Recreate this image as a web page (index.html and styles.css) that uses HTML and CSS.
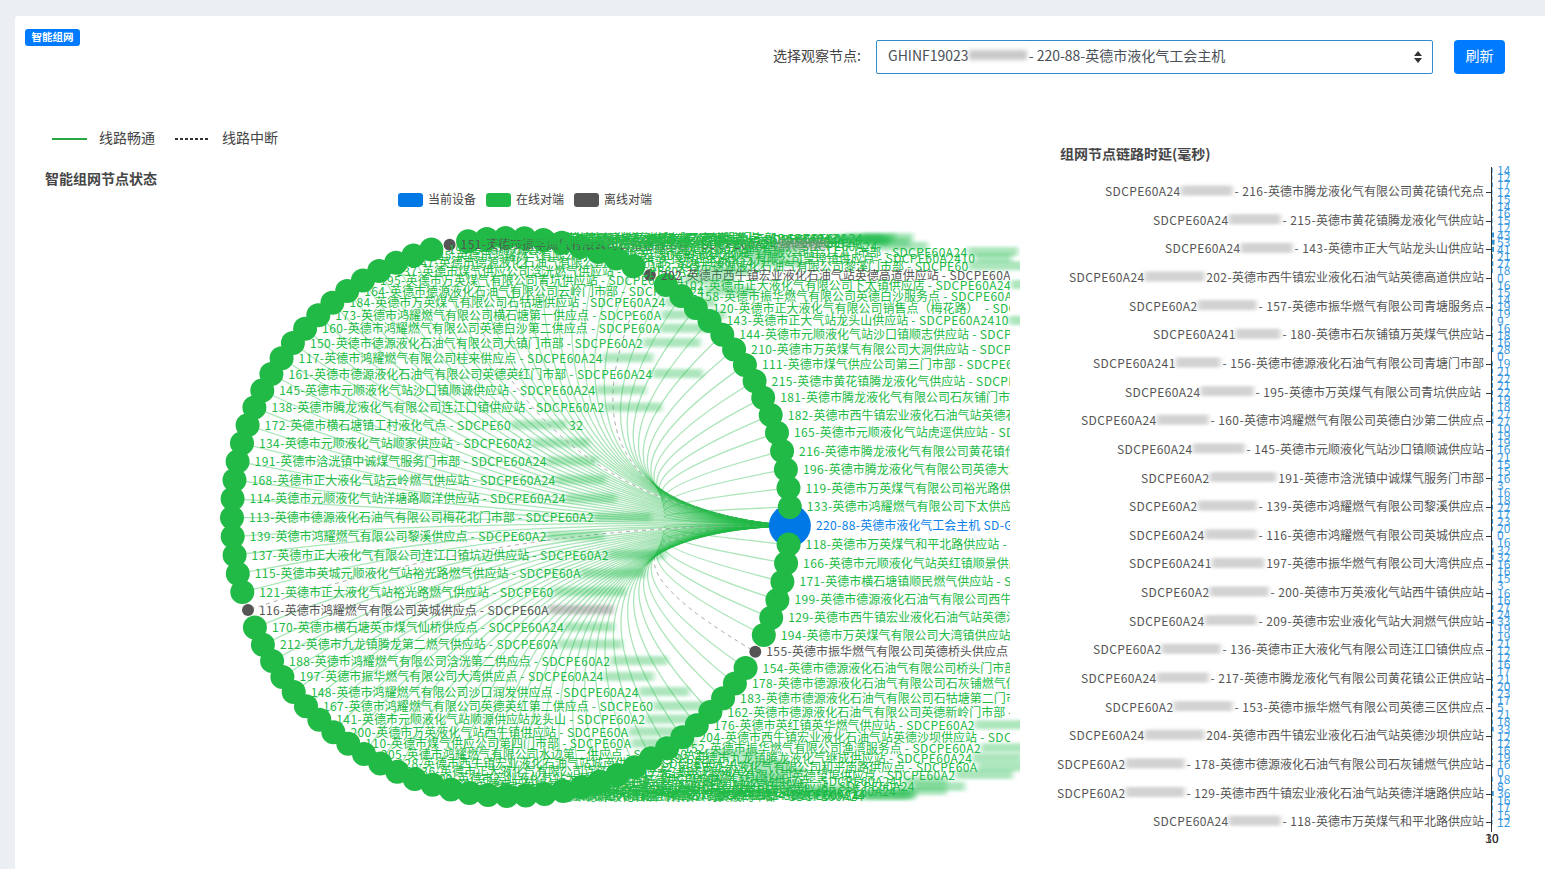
FILE: index.html
```html
<!DOCTYPE html>
<html lang="zh-CN">
<head>
<meta charset="utf-8">
<title>智能组网</title>
<link rel="stylesheet" href="styles.css">
</head>
<body>
<main class="card">
  <header class="top">
    <span class="badge">智能组网</span>
    <form class="picker">
      <label class="picker-label">选择观察节点:</label>
      <div class="select">
        <span>GHINF19023</span><span class="mask"></span><span>- 220-88-英德市液化气工会主机</span>
        <svg class="caret" width="8" height="12" viewBox="0 0 8 12"><path d="M4 0 8 5H0zM4 12 0 7h8z"/></svg>
      </div>
      <button class="btn" type="button">刷新</button>
    </form>
  </header>
  <div class="line-legend">
    <i class="solid"></i><span>线路畅通</span>
    <i class="dotted"></i><span>线路中断</span>
  </div>
  <section class="charts">
    <svg id="graph" class="graph" viewBox="15 148 1015 721" width="1015" height="721"></svg>
    <svg id="bars" class="bars" viewBox="1030 148 515 721" width="515" height="721"></svg>
  </section>
</main>
<script src="script.js"></script>
</body>
</html>
```

FILE: styles.css
```css
* { box-sizing: border-box; }
html, body { margin: 0; height: 869px; overflow: hidden; }
body {
  background: #ebeef3;
  padding: 16px 0 0 15px;
  font-family: "Noto Sans CJK SC", "Liberation Sans", sans-serif;
  color: #444;
}
.card {
  background: #fff;
  height: 853px;
  border-radius: 3px 0 0 0;
  padding-top: 13px;
}
.top { display: flex; align-items: flex-start; padding: 0 40px 0 10px; }
.badge {
  background: #007bff;
  color: #fff;
  font-size: 10.5px;
  font-weight: 700;
  line-height: 16px;
  height: 17px;
  padding: 0 6.5px;
  border-radius: 3px;
}
.picker { display: flex; align-items: center; margin: 11px 0 0 auto; }
.picker-label { font-size: 14px; color: #444; margin-right: 15px; padding-bottom: 5px; }
.select {
  width: 557px;
  height: 34px;
  border: 1px solid #2f8dcd;
  border-radius: 2px;
  display: flex;
  align-items: center;
  padding: 0 10px 5px 11px;
  font-size: 14px;
  color: #495057;
}
.mask {
  width: 58px;
  height: 10px;
  margin: 0 2px 0 0;
  background: #c9c9c9;
  filter: blur(2px);
}
.caret { margin: 5px 0 0 auto; fill: #333; }
.btn {
  width: 51px;
  height: 34px;
  margin-left: 21px;
  border: 0;
  border-radius: 4px;
  background: #007bff;
  color: #fff;
  font: inherit;
  font-size: 14px;
  padding: 0 0 5px;
}
.line-legend {
  display: flex;
  align-items: center;
  height: 18px;
  margin-top: 56px;
  padding-left: 37px;
  font-size: 14px;
  color: #444;
}
.line-legend span { margin: 0 20px 0 12px; padding-bottom: 5px; }
.line-legend i { display: block; width: 35px; height: 2px; }
.solid { background: #28a745; }
.dotted { background: repeating-linear-gradient(90deg, #333 0 3px, transparent 3px 5px); }
.charts { display: flex; }
.graph, .bars { display: block; flex: none; }
.chart-title { font-size: 14px; font-weight: 700; fill: #464646; dominant-baseline: central; }
.legend-text { font-size: 12px; fill: #444; dominant-baseline: central; }
.edge { fill: none; stroke: #22ba46; stroke-opacity: .38; stroke-width: 1.3; }
.edge-off { fill: none; stroke: #aaa; stroke-width: 1; stroke-dasharray: 4 4; }
.node-on { fill: #22ba46; }
.node-off { fill: #555; }
.node-me { fill: #0079e6; }
.label { font-size: 12px; dominant-baseline: central; white-space: pre; }
.lat { letter-spacing: .4px; }
.label-on { fill: #22ba46; }
.label-off { fill: #555; }
.label-me { fill: #0a7fe8; }
.smear-on { fill: #22ba46; fill-opacity: .36; }
.smear-off { fill: #888; fill-opacity: .5; }
.axis { stroke: #333; stroke-width: 1; fill: none; }
.cat { font-size: 12px; fill: #555; dominant-baseline: central; text-anchor: end; white-space: pre; }
.smear-cat { fill: #b4b4b4; fill-opacity: .6; }
.bar { fill: #3398db; }
.val { font-size: 12px; fill: #3d9ae0; dominant-baseline: central; }
.tick-text { font-size: 12px; fill: #333; text-anchor: middle; dominant-baseline: central; }
```

FILE: script.js
```js
const NS = 'http://www.w3.org/2000/svg';
function el(parent, tag, attrs, text) {
  const e = document.createElementNS(NS, tag);
  for (const k in attrs) e.setAttribute(k, attrs[k]);
  if (text !== undefined) e.textContent = text;
  parent.appendChild(e);
  return e;
}
/* the source font sets latin runs a little wider than the CJK fallback does */
function mixed(parent, attrs, str) {
  const t = el(parent, 'text', attrs);
  str.split(/([\x20-\x7e]+)/).forEach(run => {
    if (!run) return;
    const isLat = /^[\x20-\x7e]/.test(run);
    el(t, 'tspan', isLat ? { class: 'lat' } : {}, run);
  });
  return t;
}

/* clockwise from the current device; "name|visible id prefix|id tail" */
const NODES = [
  '220-88-英德市液化气工会主机 SD-G',
  '118-英德市万英煤气和平北路供应站', '166-英德市元顺液化气站英红镇顺景供应站', '171-英德市横石塘镇顺民燃气供应站',
  '199-英德市德源液化石油气有限公司西牛门市部', '129-英德市西牛镇宏业液化石油气站英德洋塘路供应站', '194-英德市万英煤气有限公司大湾镇供应站',
  '155-英德市振华燃气有限公司英德桥头供应点', '154-英德市德源液化石油气有限公司桥头门市部', '178-英德市德源液化石油气有限公司石灰铺燃气供应站',
  '183-英德市德源液化石油气有限公司石牯塘第二门市部', '162-英德市德源液化石油气有限公司英德新岭门市部|SDCPE60A',
  '176-英德市英红镇英华燃气供应站|SDCPE60A2', '204-英德市西牛镇宏业液化石油气站英德沙坝供应站', '152-英德市振华燃气有限公司渔湾服务点|SDCPE60A2',
  '193-英德市九龙镇腾龙液化气继成供应站', '122-英德市正大液化气有限公司和平南路供应点|SDCPE60A', '147-英德市鸿耀燃气有限公司英德望埠供应点|SDCPE60A2',
  '131-英德市元顺液化气站大站供应点|SDCPE60A241', '126-英德市腾龙液化气有限公司东华供应站', '207-英德市万英煤气有限公司横石水供应站',
  '149-英德市鸿耀燃气有限公司大站供应点', '175-英德市正大液化气有限公司望埠供应站', '186-英德市德源液化石油气有限公司黄陂门市部',
  '192-英德市元顺液化气站青塘供应站', '127-英德市振华燃气有限公司东华服务点', '203-英德市西牛镇宏业液化石油气站高道供应站',
  '169-英德市万英煤气有限公司桥头供应站', '209-英德市宏业液化气站大洞燃气供应站', '136-英德市正大液化气有限公司连江口镇供应点',
  '128-英德市西牛镇宏业液化石油气站城南供应站', '205-英德市鸿耀燃气有限公司水边第二供应点', '110-英德市煤气供应公司第四门市部|SDCPE60A',
  '200-英德市万英液化气站西牛镇供应站|SDCPE60A', '141-英德市元顺液化气站顺源供应站龙头山|SDCPE60A2', '167-英德市鸿耀燃气有限公司英德英红第二供应点|SDCPE60',
  '148-英德市鸿耀燃气有限公司沙口润发供应点', '197-英德市振华燃气有限公司大湾供应点', '188-英德市鸿耀燃气有限公司浛洸第二供应点|SDCPE60A2',
  '212-英德市九龙镇腾龙第二燃气供应站|SDCPE60A', '170-英德市横石塘英市煤气仙桥供应点', '116-英德市鸿耀燃气有限公司英城供应点|SDCPE60A',
  '121-英德市正大液化气站裕光路燃气供应站|SDCPE60', '115-英德市英城元顺液化气站裕光路燃气供应站|SDCPE60A', '137-英德市正大液化气有限公司连江口镇坑边供应站|SDCPE60A2',
  '139-英德市鸿耀燃气有限公司黎溪供应点|SDCPE60A2', '113-英德市德源液化石油气有限公司梅花北门市部|SDCPE60A2', '114-英德市元顺液化气站洋塘路顺洋供应站',
  '168-英德市正大液化气站云岭燃气供应站', '191-英德市浛洸镇中诚煤气服务门市部', '134-英德市元顺液化气站顺家供应站|SDCPE60A2',
  '172-英德市横石塘镇工村液化气点|SDCPE60|32', '138-英德市腾龙液化气有限公司连江口镇供应站|SDCPE60A2', '145-英德市元顺液化气站沙口镇顺诚供应站',
  '161-英德市德源液化石油气有限公司英德英红门市部', '117-英德市鸿耀燃气有限公司桂来供应点', '150-英德市德源液化石油气有限公司大镇门市部|SDCPE60A2',
  '160-英德市鸿耀燃气有限公司英德白沙第二供应点|SDCPE60A', '173-英德市鸿耀燃气有限公司横石塘第一供应点|SDCPE60A', '184-英德市万英煤气有限公司石牯塘供应站',
  '164-英德市德源液化石油气有限公司云岭门市部', '195-英德市万英煤气有限公司青坑供应站', '137-英德市煤气供应公司浛洸燃气供应站',
  '147-英德市德源液化石油气有限公司水边门市部', '125-英德市鸿耀燃气有限公司黄花供应点', '190-英德市万英煤气有限公司沙口供应站',
  '151-英德市振华燃气有限公司石牯塘服务点', '217-英德市腾龙液化气有限公司黄花镇公正供应站', '153-英德市振华燃气有限公司英德三区供应点',
  '156-英德市德源液化石油气有限公司青塘门市部', '157-英德市振华燃气有限公司青塘服务点', '180-英德市石灰铺镇万英煤气供应站',
  '112-英德市煤气供应公司第一门市部', '130-英德市元顺液化气站青塘供应点',
  '146-英德市德源液化石油气有限公司连江口门市部', '124-英德市正大液化气有限公司望埠镇供应点|SDCPE60A2410', '163-英德市德源液化石油气有限公司黎溪门市部|SDCPE60',
  '202-英德市西牛镇宏业液化石油气站英德高道供应站', '102-英德市正大液化气有限公司下太镇供应店', '158-英德市振华燃气有限公司英德白沙服务点',
  '120-英德市正大液化气有限公司销售点（梅花路） ', '143-英德市正大气站龙头山供应站|SDCPE60A2410', '144-英德市元顺液化气站沙口镇顺志供应站',
  '210-英德市万英煤气有限公司大洞供应站', '111-英德市煤气供应公司第三门市部', '215-英德市黄花镇腾龙液化气供应站',
  '181-英德市腾龙液化气有限公司石灰铺门市部', '182-英德市西牛镇宏业液化石油气站英德石灰铺供应站', '165-英德市元顺液化气站虎逕供应站',
  '216-英德市腾龙液化气有限公司黄花镇代充点', '196-英德市腾龙液化气有限公司英德大站供应点', '119-英德市万英煤气有限公司裕光路供应站',
  '133-英德市鸿耀燃气有限公司下太供应点'
];
const OFFLINE = new Set([7, 41, 66, 77]);

function drawGraph() {
  const svg = document.getElementById('graph');
  const defs = el(svg, 'defs', {});
  const clip = el(defs, 'clipPath', { id: 'label-clip' });
  el(clip, 'rect', { x: 15, y: 148, width: 995, height: 721 });
  const clipSmear = el(defs, 'clipPath', { id: 'smear-clip' });
  el(clipSmear, 'rect', { x: 15, y: 148, width: 1005, height: 721 });
  const blur = el(defs, 'filter', { id: 'smear', x: '-20%', y: '-150%', width: '140%', height: '400%' });
  el(blur, 'feGaussianBlur', { stdDeviation: '2.5 1.5' });

  el(svg, 'text', { class: 'chart-title', x: 45, y: 178 }, '智能组网节点状态');
  [[398, '当前设备', 'node-me'], [486, '在线对端', 'node-on'], [574, '离线对端', 'node-off']].forEach(([x, t, c]) => {
    el(svg, 'rect', { class: c, x, y: 193, width: 25, height: 14, rx: 3 });
    el(svg, 'text', { class: 'legend-text', x: x + 30, y: 198.5 }, t);
  });

  const cx = 511, cy = 517, r = 279, N = NODES.length;
  const pos = NODES.map((_, i) => {
    const a = (1.8 + i * 360 / N) * Math.PI / 180;
    return [cx + r * Math.cos(a), cy + r * Math.sin(a)];
  });
  const me = pos[0];
  const edges = el(svg, 'g', {});
  pos.forEach((p, i) => {
    if (!i) return;
    const k = 0.9;
    const qx = cx * k + (me[0] + p[0]) / 2 * (1 - k);
    const qy = cy * k + (me[1] + p[1]) / 2 * (1 - k);
    el(edges, 'path', {
      class: OFFLINE.has(i) ? 'edge-off' : 'edge',
      d: `M${me[0].toFixed(1)} ${me[1].toFixed(1)}Q${qx.toFixed(1)} ${qy.toFixed(1)} ${p[0].toFixed(1)} ${p[1].toFixed(1)}`
    });
  });
  const nodes = el(svg, 'g', {});
  el(nodes, 'circle', { class: 'node-me', cx: me[0], cy: me[1], r: 21 });
  pos.forEach((p, i) => {
    if (!i) return;
    const off = OFFLINE.has(i);
    el(nodes, 'circle', { class: off ? 'node-off' : 'node-on', cx: p[0].toFixed(1), cy: p[1].toFixed(1), r: off ? 6 : 12 });
  });

  const labels = el(svg, 'g', { 'clip-path': 'url(#label-clip)' });
  const smears = el(svg, 'g', { 'clip-path': 'url(#smear-clip)' });
  NODES.forEach((entry, i) => {
    const off = OFFLINE.has(i);
    const [name, prefix = 'SDCPE60A24', tail] = entry.split('|');
    const p = pos[i];
    const x = p[0] + (i ? (off ? 11 : 17) : 26);
    const y = p[1] - 1.5;
    const kind = i ? (off ? 'off' : 'on') : 'me';
    const full = i ? `${name} - ` : name;
    const attrs = { class: `label label-${kind}`, x: x.toFixed(1), y: y.toFixed(1) };
    const t = mixed(labels, attrs, i ? full + prefix : full);
    if (!i) return;
    const head = mixed(labels, { class: 'label', x: 0, y: -50 }, full);
    const idStart = x + head.getComputedTextLength();
    head.remove();
    const start = x + t.getComputedTextLength();
    const end = idStart + 126;
    if (tail) mixed(labels, { class: `label label-${kind}`, x: (end - 14).toFixed(1), y: y.toFixed(1) }, tail);
    if (start < 1020) {
      el(smears, 'rect', {
        class: off ? 'smear-off' : 'smear-on', filter: 'url(#smear)',
        x: start.toFixed(1), y: (y - 3.5).toFixed(1), width: Math.max(end - start - (tail ? 16 : 0), 20).toFixed(1), height: 9
      });
    }
  });
}

const CATS = [
  ['SDCPE60A24', 1105, '- 216-英德市腾龙液化气有限公司黄花镇代充点'],
  ['SDCPE60A24', 1153, '- 215-英德市黄花镇腾龙液化气供应站'],
  ['SDCPE60A24', 1165, '- 143-英德市正大气站龙头山供应站'],
  ['SDCPE60A24', 1069, '202-英德市西牛镇宏业液化石油气站英德高道供应站'],
  ['SDCPE60A2', 1129, '- 157-英德市振华燃气有限公司青塘服务点'],
  ['SDCPE60A241', 1153, '- 180-英德市石灰铺镇万英煤气供应站'],
  ['SDCPE60A241', 1093, '- 156-英德市德源液化石油气有限公司青塘门市部'],
  ['SDCPE60A24', 1125, '- 195-英德市万英煤气有限公司青坑供应站 '],
  ['SDCPE60A24', 1081, '- 160-英德市鸿耀燃气有限公司英德白沙第二供应点'],
  ['SDCPE60A24', 1117, '- 145-英德市元顺液化气站沙口镇顺诚供应站'],
  ['SDCPE60A2', 1141, '191-英德市浛洸镇中诚煤气服务门市部'],
  ['SDCPE60A2', 1129, '- 139-英德市鸿耀燃气有限公司黎溪供应点'],
  ['SDCPE60A24', 1129, '- 116-英德市鸿耀燃气有限公司英城供应点'],
  ['SDCPE60A241', 1129, '197-英德市振华燃气有限公司大湾供应点'],
  ['SDCPE60A2', 1141, '- 200-英德市万英液化气站西牛镇供应站'],
  ['SDCPE60A24', 1129, '- 209-英德市宏业液化气站大洞燃气供应站'],
  ['SDCPE60A2', 1093, '- 136-英德市正大液化气有限公司连江口镇供应点'],
  ['SDCPE60A24', 1081, '- 217-英德市腾龙液化气有限公司黄花镇公正供应站'],
  ['SDCPE60A2', 1105, '- 153-英德市振华燃气有限公司英德三区供应点'],
  ['SDCPE60A24', 1069, '204-英德市西牛镇宏业液化石油气站英德沙坝供应站'],
  ['SDCPE60A2', 1057, '- 178-英德市德源液化石油气有限公司石灰铺燃气供应站'],
  ['SDCPE60A2', 1057, '- 129-英德市西牛镇宏业液化石油气站英德洋塘路供应站'],
  ['SDCPE60A24', 1153, '- 118-英德市万英煤气和平北路供应站']
];
const VALUES = [
  14, 12, 17, 12, 15, 14, 16, 15, 12, 43, 53, 41, 21, 27, 18, 0,
  16, 15, 14, 19, 19, 9, 16, 18, 16, 28, 0,
  19, 21, 22, 21, 22, 19, 18, 27, 27, 10, 19, 19, 16, 21, 15, 15, 16, 3, 16, 18, 22, 17, 23, 20, 0,
  16, 32, 32, 16, 16, 15, 3, 16, 16, 27, 24, 33, 19, 19, 21, 12, 12, 16, 17, 21, 20, 23, 17, 5, 21, 18, 33, 12, 12, 16, 19, 16, 0,
  18, 8, 36, 16, 17, 15, 12
];

function drawBars() {
  const svg = document.getElementById('bars');
  const defs = el(svg, 'defs', {});
  const clip = el(defs, 'clipPath', { id: 'val-clip' });
  el(clip, 'rect', { x: 1492, y: 160, width: 18, height: 680 });
  const blur = el(defs, 'filter', { id: 'smear-c', x: '-20%', y: '-150%', width: '140%', height: '400%' });
  el(blur, 'feGaussianBlur', { stdDeviation: '2.5 1.5' });

  el(svg, 'text', { class: 'chart-title', x: 1060, y: 153 }, '组网节点链路时延(毫秒)');

  const step = 7.16, y0 = 170.6, axisX = 1491.5;
  const vals = el(svg, 'g', { 'clip-path': 'url(#val-clip)' });
  VALUES.forEach((v, i) => {
    const y = y0 + i * step;
    el(svg, 'rect', { class: 'bar', x: axisX, y: (y - 2.5).toFixed(1), width: (v * 0.05 + 0.4).toFixed(1), height: 5 });
    el(vals, 'text', { class: 'val', x: 1497, y: (y - 1).toFixed(1) }, v);
  });
  el(svg, 'path', { class: 'axis', d: `M${axisX} 167V828.5M${axisX} 828V832` });
  CATS.forEach(([prefix, startX, suffix], i) => {
    const y = y0 + (3 + i * 4) * step;
    el(svg, 'path', { class: 'axis', d: `M1486 ${y.toFixed(0)}.5H${axisX}` });
    const s = mixed(svg, { class: 'cat', x: 1484, y: (y - 2).toFixed(1) }, suffix);
    const left = 1484 - s.getComputedTextLength();
    const p = mixed(svg, { class: 'cat', x: startX, y: (y - 2).toFixed(1), style: 'text-anchor:start' }, prefix);
    const pEnd = startX + p.getComputedTextLength();
    el(svg, 'rect', {
      class: 'smear-cat', filter: 'url(#smear-c)',
      x: pEnd.toFixed(1), y: (y - 6.5).toFixed(1), width: Math.max(left - pEnd - 2, 8).toFixed(1), height: 10
    });
  });
  el(svg, 'text', { class: 'tick-text', x: 1492, y: 837 }, '30');
  el(svg, 'text', { class: 'tick-text', x: 1492, y: 837 }, '10');
}

drawGraph();
drawBars();
```
